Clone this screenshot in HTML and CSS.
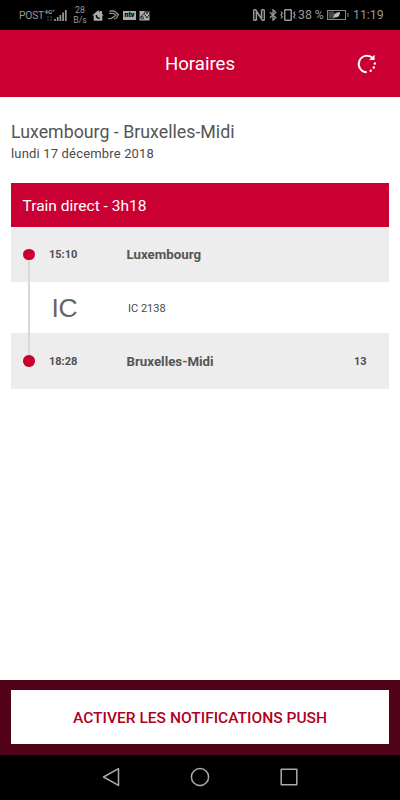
FILE: index.html
```html
<!DOCTYPE html>
<html lang="fr">
<head>
<meta charset="utf-8">
<title>Horaires</title>
<link rel="stylesheet" href="styles.css">
</head>
<body>
<div class="screen">
  <div class="status">
    <span class="carrier">POST</span>
    <span class="network"><span class="gen">4G⁺</span><svg width="7" height="5" viewBox="0 0 7 5"><path d="M2 0v5M5 0v5" stroke="#555" stroke-dasharray="2 1"/></svg></span>
    <svg class="signal" width="13" height="12" viewBox="0 0 13 12"><path d="M1 12V10M3.700 12V8M6.400 12V6M9.100 12V3.500M11.800 12V1" stroke="#999" stroke-width="1.700"/></svg>
    <span class="rate"><span>28</span><span>B/s</span></span>
    <svg class="home" width="12" height="11" viewBox="0 0 12 11"><path fill="#aaa" d="M6 .3L8 2V1h2v2.700L11.800 5.500H10.300V10.700H1.700V5.500H.2z"/><path d="M4.300 5c0 1.800 1.200 3.200 3.300 3.300" stroke="#000" stroke-width="1.400" fill="none"/></svg>
    <svg class="waves" width="12" height="10" viewBox="0 0 12 10"><path d="M1.500 1H6l4.500 3.500L8.500 8 6 9M1 3.400h4.500L8 5 6 6.700M0 8.600h3l3-2" fill="none" stroke="#888" stroke-width="1.300"/></svg>
    <span class="ntv">ntv</span>
    <svg class="map" width="11" height="11" viewBox="0 0 11 11"><path fill="#aaa" d="M.5 1h10v9.500H.5z"/><path d="M1 7.500l4-4" stroke="#222"/><circle cx="3.200" cy="7.800" r="1.300" fill="none" stroke="#222"/><path d="M8 8L5.300 3.700a2.700 2.700 0 1 1 5.400 0z" fill="#bbb" stroke="#111" stroke-width=".9"/><circle cx="8" cy="3" r="1" fill="#111"/></svg>
    <svg class="nfc" width="12" height="12" viewBox="0 0 12 12"><path d="M3 .7H1.500Q.7.700.7 1.500v9q0 .8.800.8H3M9 .7h1.500q.8 0 .8.800v9q0 .8-.8.800H9" fill="none" stroke="#999" stroke-width="1.400"/><path d="M3.400 11.500V2L8.600 10V.5" fill="none" stroke="#999" stroke-width="1.600"/></svg>
    <svg class="bt" width="8" height="12" viewBox="0 0 8 12"><path d="M.8 3.200l6 5.300L4 11.200V.8l2.800 2.700-6 5.300" fill="none" stroke="#999" stroke-width="1.300"/></svg>
    <svg class="vibrate" width="16" height="12" viewBox="0 0 16 12"><rect x="4.700" y=".7" width="6.600" height="10.600" rx="1" fill="none" stroke="#999" stroke-width="1.500"/><path d="M1 2.500l1.300 1.700L1 6l1.300 1.700L1 9.500M15 2.500l-1.300 1.700L15 6l-1.300 1.700L15 9.500" fill="none" stroke="#999" stroke-width="1.200"/></svg>
    <span class="percent">38 %</span>
    <svg class="battery" width="22" height="10" viewBox="0 0 22 10"><rect x=".5" y=".5" width="18" height="9" fill="none" stroke="#888"/><path fill="#444" d="M1.500 1.500h6v7h-6z"/><path fill="#bbb" d="M6.500 8c0-4 2-5.500 6.500-6 0 4-2 6-5 5.200L7 8.500z"/><path d="M21 3v4" stroke="#888"/></svg>
    <span class="clock">11:19</span>
  </div>
  <header class="header">
    <h1>Horaires</h1>
    <svg class="refresh" width="22" height="22" viewBox="0 0 22 22"><path d="M10.800 19.300A8.300 8.300 0 1 1 16.800 5" fill="none" stroke="#fff" stroke-width="2"/><path fill="#fff" d="M18.600 1.800V7h-5.500z"/><g fill="#fff"><circle cx="18.800" cy="10.500" r="1.200"/><circle cx="17.800" cy="14.500" r="1.200"/><circle cx="14.700" cy="17.800" r="1.200"/></g></svg>
  </header>
  <main class="content">
    <h2>Luxembourg - Bruxelles-Midi</h2>
    <p class="date">lundi 17 décembre 2018</p>
    <section class="trip">
      <div class="trip-title">Train direct - 3h18</div>
      <div class="row stop first"><i class="track"><b class="dot"></b></i><span class="time">15:10</span><span class="place">Luxembourg</span></div>
      <div class="row train"><i class="track"></i><span class="logo">IC</span><span class="number">IC 2138</span></div>
      <div class="row stop last"><i class="track"><b class="dot"></b></i><span class="time">18:28</span><span class="place">Bruxelles-Midi</span><span class="platform">13</span></div>
    </section>
  </main>
  <footer class="footer"><button class="push">ACTIVER LES NOTIFICATIONS PUSH</button></footer>
  <nav class="nav">
    <svg width="20" height="20" viewBox="0 0 20 20"><path d="M17.500 1.600v16.800L2.500 10z"/></svg>
    <svg width="20" height="20" viewBox="0 0 20 20"><circle cx="10" cy="10" r="8.600"/></svg>
    <svg width="20" height="20" viewBox="0 0 20 20"><rect x="2.200" y="2.200" width="15.600" height="15.600"/></svg>
  </nav>
</div>
</body>
</html>
```
FILE: styles.css
```css
* { box-sizing: border-box; }
body { margin: 0; font-family: Roboto, "Liberation Sans", sans-serif; background: #fff; }
svg { display: block; flex: none; }
h1, h2, p { margin: 0; font-weight: 400; }
.screen { width: 400px; height: 800px; display: flex; flex-direction: column; overflow: hidden; }

.status { height: 30px; background: #000; color: #999; display: flex; align-items: center; padding: 0 16px 0 19px; white-space: nowrap; flex: none; }
.carrier { font-size: 10.300px; width: 26px; letter-spacing: -.2px; }
.network { width: 9px; height: 14px; display: flex; flex-direction: column; align-items: center; }
.gen { font-size: 6px; line-height: 8px; font-weight: 700; }
.rate { width: 18px; margin-left: 4px; display: flex; flex-direction: column; align-items: center; font-size: 8.800px; line-height: 10px; }
.home { margin-left: 3px; }
.waves { margin-left: 4px; }
.ntv { margin-left: 3px; width: 13px; height: 9px; background: #aaa; color: #000; font-size: 7px; line-height: 8px; font-weight: 900; text-align: center; }
.map { margin-left: 3px; }
.nfc { margin-left: auto; }
.bt { margin-left: 4px; }
.vibrate { margin-left: 3px; }
.percent { margin-left: 2px; width: 27px; font-size: 12.300px; }
.battery { margin-left: 2px; }
.clock { margin-left: 4px; width: 31px; font-size: 12.300px; }

.header { height: 67px; background: #cb0032; color: #fff; display: grid; grid-template-columns: 44px 1fr 44px; align-items: center; flex: none; }
.header h1 { grid-column: 2; font-size: 18.600px; text-align: center; padding-top: 1px; }

.content { flex: 1; padding: 24px 11px 0; color: #4a4a4a; }
.content h2 { font-size: 17.800px; line-height: 22px; color: #555; }
.date { font-size: 13px; line-height: 20px; letter-spacing: .17px; padding-top: 1px; }
.trip { margin-top: 19px; }
.trip-title { height: 44px; padding-left: 11.500px; background: #cb0032; color: #fff; font-size: 15.500px; line-height: 46px; }
.row { display: grid; grid-template-columns: 38px 78px 1fr 35px; align-items: center; }
.stop { background: #ededed; height: 56px; font-weight: 700; }
.first { height: 55px; }
.train { height: 51px; }
.track { align-self: stretch; width: 36px; display: flex; justify-content: center; align-items: center; background: linear-gradient(#d8d8d8, #d8d8d8) center / 2px 100% no-repeat; }
.first .track { background-size: 2px 50%; background-position: center bottom; }
.last .track { background-size: 2px 50%; background-position: center top; }
.dot { width: 11.500px; height: 11.500px; border-radius: 50%; background: #cb0032; }
.time, .platform { font-size: 11px; color: #505050; }
.place { font-size: 13.300px; color: #555; margin-left: -.5px; }
.logo { font: 26.500px "Liberation Sans", sans-serif; color: #666; padding: 2px 0 0 2.500px; letter-spacing: -.3px; }
.number { font-size: 11px; padding: 1px 0 0 1px; }

.footer { height: 75px; padding: 10px 11px 11px; background: #520319; flex: none; }
.push { display: block; width: 100%; height: 54px; border: 0; padding: 2px 0 0; background: #fff; color: #b00020; font: 500 15.550px Roboto, sans-serif; box-shadow: 0 0 1px #250008; }
.nav { height: 45px; background: #000; display: flex; justify-content: center; gap: 69px; padding-top: 12px; flex: none; }
.nav svg { fill: none; stroke: #aaa; stroke-width: 1.500; stroke-linejoin: round; }
```
